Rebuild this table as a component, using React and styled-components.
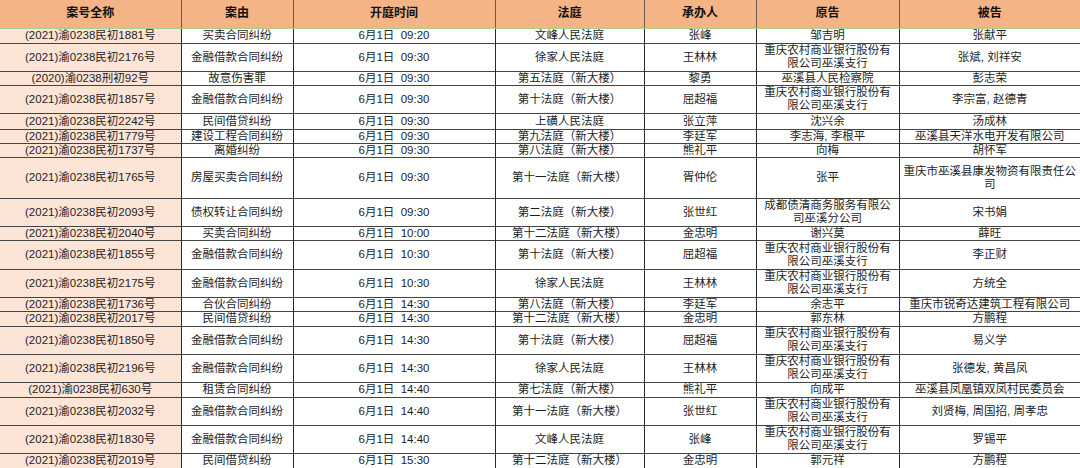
import React from 'react';
import styled, { createGlobalStyle } from 'styled-components';

const BANK = '重庆农村商业银行股份有限公司巫溪支行';

const rows = [
  ['(2021)渝0238民初1881号', '买卖合同纠纷', '6月1日  09:20', '文峰人民法庭', '张峰', '邹吉明', '张献平', 15],
  ['(2021)渝0238民初2176号', '金融借款合同纠纷', '6月1日  09:30', '徐家人民法庭', '王林林', BANK, '张斌, 刘祥安', 28],
  ['(2020)渝0238刑初92号', '故意伤害罪', '6月1日  09:30', '第五法庭（新大楼）', '黎勇', '巫溪县人民检察院', '彭志荣', 14],
  ['(2021)渝0238民初1857号', '金融借款合同纠纷', '6月1日  09:30', '第十法庭（新大楼）', '屈超福', BANK, '李宗富, 赵德青', 28],
  ['(2021)渝0238民初2242号', '民间借贷纠纷', '6月1日  09:30', '上磺人民法庭', '张立萍', '沈兴余', '汤成林', 16],
  ['(2021)渝0238民初1779号', '建设工程合同纠纷', '6月1日  09:30', '第九法庭（新大楼）', '李廷军', '李志海, 李根平', '巫溪县天洋水电开发有限公司', 14],
  ['(2021)渝0238民初1737号', '离婚纠纷', '6月1日  09:30', '第八法庭（新大楼）', '熊礼平', '向梅', '胡怀军', 13],
  ['(2021)渝0238民初1765号', '房屋买卖合同纠纷', '6月1日  09:30', '第十一法庭（新大楼）', '胥仲伦', '张平', '重庆市巫溪县康发物资有限责任公司', 41],
  ['(2021)渝0238民初2093号', '债权转让合同纠纷', '6月1日  09:30', '第二法庭（新大楼）', '张世红', '成都债清商务服务有限公司巫溪分公司', '宋书娟', 28],
  ['(2021)渝0238民初2040号', '买卖合同纠纷', '6月1日  10:00', '第十二法庭（新大楼）', '金忠明', '谢兴莫', '薛旺', 14],
  ['(2021)渝0238民初1855号', '金融借款合同纠纷', '6月1日  10:30', '第十法庭（新大楼）', '屈超福', BANK, '李正财', 29],
  ['(2021)渝0238民初2175号', '金融借款合同纠纷', '6月1日  10:30', '徐家人民法庭', '王林林', BANK, '方统全', 28],
  ['(2021)渝0238民初1736号', '合伙合同纠纷', '6月1日  14:30', '第八法庭（新大楼）', '李廷军', '余志平', '重庆市锐奇达建筑工程有限公司', 14],
  ['(2021)渝0238民初2017号', '民间借贷纠纷', '6月1日  14:30', '第十二法庭（新大楼）', '金忠明', '郭东林', '方鹏程', 15],
  ['(2021)渝0238民初1850号', '金融借款合同纠纷', '6月1日  14:30', '第十法庭（新大楼）', '屈超福', BANK, '易义学', 28],
  ['(2021)渝0238民初2196号', '金融借款合同纠纷', '6月1日  14:30', '徐家人民法庭', '王林林', BANK, '张德发, 黄昌凤', 28],
  ['(2021)渝0238民初630号', '租赁合同纠纷', '6月1日  14:40', '第七法庭（新大楼）', '熊礼平', '向成平', '巫溪县凤凰镇双凤村民委员会', 15],
  ['(2021)渝0238民初2032号', '金融借款合同纠纷', '6月1日  14:40', '第十一法庭（新大楼）', '张世红', BANK, '刘贤梅, 周国招, 周孝忠', 28],
  ['(2021)渝0238民初1830号', '金融借款合同纠纷', '6月1日  14:40', '文峰人民法庭', '张峰', BANK, '罗锡平', 28],
  ['(2021)渝0238民初2019号', '民间借贷纠纷', '6月1日  15:30', '第十二法庭（新大楼）', '金忠明', '郭元祥', '方鹏程', 15],
];

const headers = ['案号全称', '案由', '开庭时间', '法庭', '承办人', '原告', '被告'];
const widths = [181, 112, 202, 149, 112, 143, 181];

const GlobalStyle = createGlobalStyle`
  html, body {
    margin: 0;
    padding: 0;
    background: #ffffff;
    overflow: hidden;
  }
  body {
    font-family: "Liberation Sans", "Noto Sans CJK SC", sans-serif;
  }
`;

const Sheet = styled.table`
  width: 1080px;
  table-layout: fixed;
  border-collapse: collapse;
  color: #1e1e1e;
  font-size: 11.5px;
  line-height: 13px;
`;

const HeadRow = styled.tr`
  height: 28px;
  background: #f4b485;
`;

const HeadCell = styled.th`
  padding: 0 3px;
  font-size: 12px;
  font-weight: 700;
  color: #111;
  text-align: center;
  border-left: 1px solid #6b5a4c;
  border-bottom: 1px solid #a9cf8e;
  &:first-child {
    border-left: none;
  }
`;

const Row = styled.tr`
  height: ${(p) => p.$h}px;
`;

const Cell = styled.td`
  padding: 0 3px;
  text-align: center;
  vertical-align: middle;
  white-space: pre-wrap;
  border-left: 1px solid #2a2a2a;
  border-top: 1px solid #444;
  background: ${(p) => (p.$case ? '#fce4d6' : '#ffffff')};
  &:first-child {
    border-left: none;
  }
`;

export default function App() {
  return (
    <>
      <GlobalStyle />
      <Sheet>
        <colgroup>
          {widths.map((w, i) => (
            <col key={i} style={{ width: w }} />
          ))}
        </colgroup>
        <thead>
          <HeadRow>
            {headers.map((h) => (
              <HeadCell key={h}>{h}</HeadCell>
            ))}
          </HeadRow>
        </thead>
        <tbody>
          {rows.map((r) => (
            <Row key={r[0]} $h={r[7]}>
              {r.slice(0, 7).map((v, i) => (
                <Cell key={i} $case={i === 0}>
                  {v}
                </Cell>
              ))}
            </Row>
          ))}
        </tbody>
      </Sheet>
    </>
  );
}
